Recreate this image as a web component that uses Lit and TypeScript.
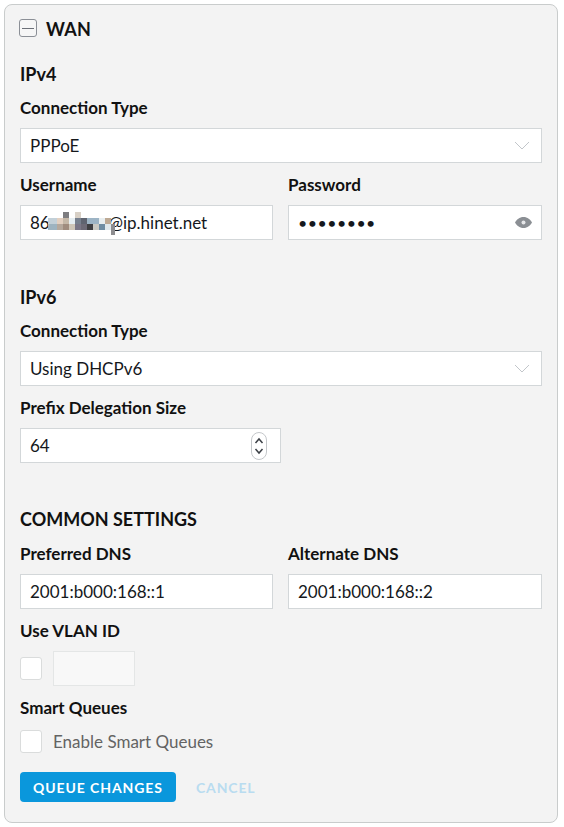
import { LitElement, html, css, svg } from 'lit';
import { customElement } from 'lit/decorators.js';

// mosaic over the username, [x, y, w, h, colour] in page pixels
const MOSAIC: [number, number, number, number, string][] = [
  [63, 212, 6, 6, '#7d7d80'], [75, 212, 6, 6, '#d8d0c6'],
  [48, 218, 9, 6, '#c3d0d8'], [57, 218, 6, 6, '#e2cfc0'], [63, 218, 6, 6, '#c5b8a8'],
  [69, 218, 6, 6, '#e6eef2'], [75, 218, 6, 6, '#77808e'], [81, 218, 6, 6, '#5f6470'],
  [87, 218, 12, 6, '#9db4c5'], [99, 218, 6, 6, '#e8eef0'], [105, 218, 6, 6, '#bda994'],
  [48, 224, 9, 6, '#9db3c0'], [57, 224, 6, 6, '#b5a89c'], [63, 224, 6, 6, '#a08c7e'],
  [69, 224, 6, 6, '#cfc6b8'], [75, 224, 6, 6, '#7a7686'], [81, 224, 6, 6, '#6d6a76'],
  [87, 224, 6, 6, '#3f3f42'], [93, 224, 6, 6, '#c9c8c2'], [99, 224, 6, 6, '#6f8da3'],
  [105, 224, 6, 6, '#dfe8ec'], [111, 224, 4, 11, '#8d8d90'],
];
// top left of the username field's padding box
const ORIGIN_X = 21;
const ORIGIN_Y = 206;

@customElement('app-root')
export class AppRoot extends LitElement {
  static styles = css`
    :host {
      display: block;
      font-family: Lato, "Liberation Sans", sans-serif;
      color: #111;
    }
    .page { padding: 4px 6px 4px 4px; }
    .panel {
      box-sizing: border-box;
      height: 819px;
      background: #f3f3f3;
      border: 1px solid #c9cccc;
      border-radius: 8px;
      padding: 12px 15px 0;
    }
    .title {
      display: flex;
      align-items: center;
      gap: 9px;
      height: 24px;
      font-size: 18px;
      font-weight: 700;
      letter-spacing: 0.2px;
    }
    .toggle {
      box-sizing: border-box;
      width: 18px;
      height: 18px;
      margin: -2px 0 0 -1px;
      border: 1px solid #8b8f96;
      border-radius: 3px;
      background: #f6f6f6;
      display: flex;
      align-items: center;
      justify-content: center;
    }
    .toggle i { display: block; width: 12px; height: 1px; background: #6c7078; }
    h3 {
      margin: 0;
      font-size: 18px;
      line-height: 20px;
      font-weight: 700;
    }
    .ipv4 { margin-top: 23px; }
    .ipv6 { margin-top: 47px; }
    .common { margin-top: 46px; }
    label, .label {
      display: block;
      font-size: 17px;
      line-height: 20px;
      font-weight: 700;
    }
    h3 + .label { margin-top: 14px; }
    .field {
      box-sizing: border-box;
      position: relative;
      height: 35px;
      margin-top: 10px;
      padding: 0 9px;
      display: flex;
      align-items: center;
      justify-content: space-between;
      background: #fff;
      border: 1px solid #d3d7d9;
      font-size: 17px;
      color: #15181c;
    }
    .row {
      display: grid;
      grid-template-columns: 253px 254px;
      column-gap: 15px;
      margin-top: 12px;
    }
    .row.dns { margin-top: 15px; }
    .stack { margin-top: 12px; }
    .short { width: 261px; }
    .dots { font-size: 16px; letter-spacing: 0.45px; line-height: 1; }
    .gap { display: inline-block; width: 59px; }
    .mosaic { position: absolute; }
    .check {
      box-sizing: border-box;
      flex: none;
      width: 22px;
      height: 23px;
      background: #fff;
      border: 1px solid #dadcdc;
      border-radius: 3px;
    }
    .vlan {
      display: flex;
      align-items: center;
      gap: 11px;
      margin-top: 10px;
    }
    .vlan-input {
      box-sizing: border-box;
      width: 82px;
      height: 35px;
      background: #f8f8f8;
      border: 1px solid #e4e6e6;
    }
    .smart {
      display: flex;
      align-items: center;
      gap: 11px;
      margin-top: 12px;
      font-size: 17px;
      color: #636363;
    }
    .actions {
      display: flex;
      align-items: center;
      gap: 20px;
      margin-top: 19px;
    }
    .primary {
      width: 156px;
      height: 30px;
      padding: 0;
      border: 0;
      border-radius: 4px;
      background: #0a97dc;
      color: #fff;
      font: 700 14px Lato, "Liberation Sans", sans-serif;
      letter-spacing: 0.9px;
    }
    .cancel {
      font-size: 14px;
      font-weight: 700;
      letter-spacing: 0.85px;
      color: #b9dcf0;
    }
    svg { display: block; flex: none; }
    .chevron { margin-right: 2px; }
    .spinner { margin-right: 4px; }
  `;

  private chevron() {
    return html`<svg class="chevron" width="16" height="9" viewBox="0 0 16 9" fill="none" stroke="#c2c6ca" stroke-width="1">
      <path d="M1 1l7 7 7-7"></path>
    </svg>`;
  }

  private eye() {
    return html`<svg width="17" height="11" viewBox="0 0 17 11">
      <path fill="#8b8f94" d="M8.500 0C12.400 0 15.600 2.600 17 5.500 15.600 8.400 12.400 11 8.500 11S1.400 8.400 0 5.500C1.400 2.600 4.600 0 8.500 0z"></path>
      <circle cx="8.500" cy="5.500" r="2" fill="#e6e7e9"></circle>
    </svg>`;
  }

  private spinner() {
    return html`<svg class="spinner" width="16" height="28" viewBox="0 0 16 28" fill="none">
      <rect x="0.500" y="0.500" width="15" height="27" rx="7.500" fill="#fff" stroke="#c4c7ca"></rect>
      ${svg`<path d="M4.500 11l3.500-4 3.500 4M4.500 17l3.500 4 3.500-4" stroke="#3c4046" stroke-width="1.500"></path>`}
    </svg>`;
  }

  render() {
    return html`
      <div class="page">
        <div class="panel">
          <div class="title"><span class="toggle"><i></i></span>WAN</div>

          <h3 class="ipv4">IPv4</h3>
          <div class="label">Connection Type</div>
          <div class="field">PPPoE ${this.chevron()}</div>
          <div class="row">
            <div>
              <label>Username</label>
              <div class="field">
                <span>86<span class="gap"></span>@ip.hinet.net</span>
                ${MOSAIC.map(([x, y, w, h, c]) => html`<i class="mosaic" style="left:${x - ORIGIN_X}px;top:${y - ORIGIN_Y}px;width:${w}px;height:${h}px;background:${c}"></i>`)}
              </div>
            </div>
            <div>
              <label>Password</label>
              <div class="field"><span class="dots">••••••••</span>${this.eye()}</div>
            </div>
          </div>

          <h3 class="ipv6">IPv6</h3>
          <div class="label">Connection Type</div>
          <div class="field">Using DHCPv6 ${this.chevron()}</div>
          <div class="stack">
            <label>Prefix Delegation Size</label>
            <div class="field short">64 ${this.spinner()}</div>
          </div>

          <h3 class="common">COMMON SETTINGS</h3>
          <div class="row dns">
            <div>
              <label>Preferred DNS</label>
              <div class="field">2001:b000:168::1</div>
            </div>
            <div>
              <label>Alternate DNS</label>
              <div class="field">2001:b000:168::2</div>
            </div>
          </div>
          <div class="stack">
            <label>Use VLAN ID</label>
            <div class="vlan"><span class="check"></span><span class="vlan-input"></span></div>
          </div>
          <div class="stack">
            <label>Smart Queues</label>
            <div class="smart"><span class="check"></span>Enable Smart Queues</div>
          </div>
          <div class="actions">
            <button class="primary">QUEUE CHANGES</button>
            <span class="cancel">CANCEL</span>
          </div>
        </div>
      </div>
    `;
  }
}
